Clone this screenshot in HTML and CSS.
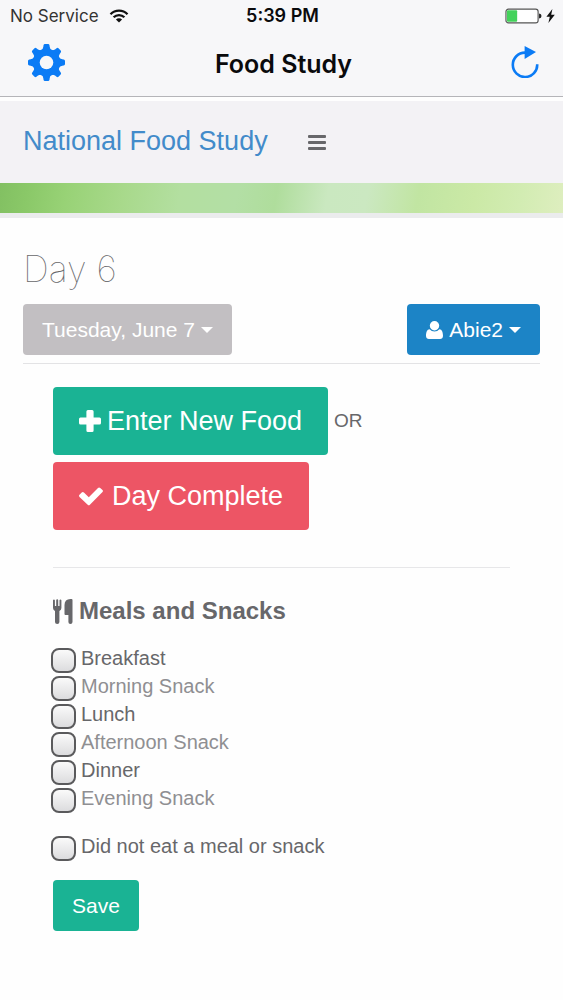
FILE: index.html
```html
<!DOCTYPE html>
<html lang="en">
<head>
<meta charset="utf-8">
<meta name="viewport" content="width=device-width, initial-scale=1">
<title>Food Study</title>
<link rel="stylesheet" href="styles.css">
</head>
<body>
<header class="top">
  <div class="status">
    <div class="carrier">
      <span>No Service</span>
      <svg class="wifi" viewBox="0 0 20 14" aria-hidden="true">
        <path d="M1.5 5.2a12 12 0 0 1 17 0M4.6 8.3a7.6 7.6 0 0 1 10.8 0" fill="none" stroke="currentColor" stroke-width="2.3"/>
        <path d="M10 13.6 6.9 10.5a4.4 4.4 0 0 1 6.2 0z" fill="currentColor"/>
      </svg>
    </div>
    <time class="clock">5:39 PM</time>
    <div class="power">
      <svg class="battery" viewBox="0 0 38 16" aria-hidden="true">
        <rect x="1" y="1" width="33" height="14" rx="2.5" fill="#fff" stroke="#555" stroke-width="1.2"/>
        <rect x="2" y="2" width="10.5" height="12" rx="1" fill="#43d25b"/>
        <path d="M35 5.4q2.5 .4 2.5 2.6t-2.5 2.6z" fill="#222"/>
      </svg>
      <svg class="bolt" viewBox="0 0 9 14" aria-hidden="true"><path d="M6.4 0 .4 7.8h3.4L2.4 14 8.8 5.8H5.2z" fill="#111"/></svg>
    </div>
  </div>
  <div class="titlebar">
    <button class="icon-btn" type="button" aria-label="Settings">
      <svg class="gear" viewBox="0 0 36 36" aria-hidden="true">
        <g fill="currentColor">
          <path id="tooth" d="M13 6q1.600-1 1.900-3.300l.2-1.400Q15.300 0 16.500 0h3q1.200 0 1.400 1.300l.2 1.400Q21.400 5 23 6v24q-1.600 1-1.900 3.300l-.2 1.400q-.2 1.300-1.400 1.300h-3q-1.200 0-1.400-1.300l-.2-1.400Q14.600 31 13 30z"/>
          <use href="#tooth" transform="rotate(45 18 18)"/>
          <use href="#tooth" transform="rotate(90 18 18)"/>
          <use href="#tooth" transform="rotate(135 18 18)"/>
          <circle cx="18" cy="18" r="13.400"/>
        </g>
        <circle cx="18" cy="18" r="6.600" fill="#f7f7f9"/>
      </svg>
    </button>
    <h1 class="app-title">Food Study</h1>
    <button class="icon-btn" type="button" aria-label="Reload">
      <svg class="reload" viewBox="0 0 28 32" aria-hidden="true">
        <path d="M15 6.600H14A12.200 12.200 0 1 0 26.200 18.200" fill="none" stroke="currentColor" stroke-width="2.600"/>
        <path d="M13.600 0v13L25 6z" fill="currentColor"/>
      </svg>
    </button>
  </div>
</header>

<nav class="nav">
  <a class="brand" href="#">National Food Study</a>
  <button class="menu" type="button" aria-label="Menu"><span class="bar"></span><span class="bar"></span><span class="bar"></span></button>
</nav>
<div class="banner"></div>

<main class="page">
  <h2 class="day">Day 6</h2>
  <div class="pickers">
    <button class="btn btn-muted" type="button">Tuesday, June 7<span class="caret"></span></button>
    <button class="btn btn-blue" type="button">
      <svg class="user" viewBox="0 0 17 18" aria-hidden="true"><path d="M3.600 8.200a6.300 6.300 0 0 0 9.800 0C16 8.200 17 11.500 17 14.800 17 17 15.700 18 14 18H3c-1.700 0-3-1-3-3.200C0 11.500 1 8.200 3.600 8.200z"/><circle cx="8.500" cy="4.700" r="4.700"/></svg>Abie2<span class="caret"></span>
    </button>
  </div>

  <div class="content">
    <div class="actions">
      <div class="action-row">
        <button class="btn btn-large btn-green" type="button">
          <svg class="glyph" viewBox="0 0 22 22" aria-hidden="true"><path d="M8.900 0h4.200q1.500 0 1.500 1.500v5.900h5.900q1.500 0 1.500 1.500v4.200q0 1.500-1.500 1.500h-5.900v5.900q0 1.500-1.500 1.500H8.900q-1.500 0-1.500-1.500v-5.900H1.500Q0 14.600 0 13.100V8.900q0-1.500 1.500-1.500h5.900V1.500Q7.400 0 8.900 0z"/></svg>Enter New Food
        </button>
        <span class="or">OR</span>
      </div>
      <button class="btn btn-large btn-red" type="button">
        <svg class="glyph check" viewBox="0 0 24 19" aria-hidden="true"><path d="M23.500 5 10.900 17.700q-1.100 1-2.200 0L.5 9.900q-1-1.100 0-2.200l2.200-2.200q1.100-1 2.200 0l4.900 4.800L19 1q1.100-1 2.200 0l2.300 2q.9 1 0 2z"/></svg>Day Complete
      </button>
    </div>

    <form class="meals">
      <h3 class="meals-title">
        <svg class="cutlery" viewBox="0 0 20 25" aria-hidden="true"><path d="M0 1.200a1 1 0 0 1 1.900 0V7h1.300V1.200a1 1 0 0 1 2 0V7h1.300V1.200a1 1 0 0 1 1.900 0V9q0 2-2 2.900V23q0 2-2.200 2T2 23V11.900Q0 11 0 9zM19.500 1v22q0 2-2.100 2-2 0-2-2v-7h-3q-.9 0-.9-.9V6q0-6 6-6h1q1 0 1 1z"/></svg>Meals and Snacks
      </h3>
      <div class="checks">
        <label class="check-row"><input class="box" type="checkbox"><span>Breakfast</span></label>
        <label class="check-row light"><input class="box" type="checkbox"><span>Morning Snack</span></label>
        <label class="check-row"><input class="box" type="checkbox"><span>Lunch</span></label>
        <label class="check-row light"><input class="box" type="checkbox"><span>Afternoon Snack</span></label>
        <label class="check-row"><input class="box" type="checkbox"><span>Dinner</span></label>
        <label class="check-row light"><input class="box" type="checkbox"><span>Evening Snack</span></label>
      </div>
      <div class="checks">
        <label class="check-row"><input class="box" type="checkbox"><span>Did not eat a meal or snack</span></label>
      </div>
      <button class="btn btn-green" type="submit">Save</button>
    </form>
  </div>
</main>
</body>
</html>
```
FILE: styles.css
```css
* { box-sizing: border-box; }
body {
  margin: 0;
  background: #fefefe;
  color: #67676a;
  font: 20px/28px "Liberation Sans", Arial, sans-serif;
}
h1, h2, h3 { margin: 0; }
svg { display: block; flex: none; }
button { font: inherit; cursor: pointer; }

/* Status and title bars */
.top {
  background: #f7f7f9;
  border-bottom: 1px solid #b5b5b9;
  font-family: Inter, sans-serif;
  color: #0a0a0c;
}
.status {
  display: grid;
  grid-template-columns: 1fr auto 1fr;
  align-items: center;
  height: 32px;
  padding: 0 8px 0 10px;
  font-size: 17px;
}
.carrier { display: flex; align-items: center; gap: 10px; color: #333; }
.wifi { width: 20px; height: 14px; color: #111; }
.clock { font-size: 18px; font-weight: 600; }
.power { display: flex; align-items: center; justify-content: flex-end; gap: 4px; }
.battery { width: 37px; height: 16px; }
.bolt { width: 9px; height: 14px; }
.titlebar {
  display: grid;
  grid-template-columns: 1fr auto 1fr;
  align-items: center;
  height: 64px;
  padding: 0 24px 4px 28px;
}
.icon-btn {
  justify-self: start;
  padding: 0;
  border: 0;
  background: none;
  color: #0b7bf5;
}
.icon-btn:last-child { justify-self: end; }
.gear { width: 37px; height: 37px; }
.reload { width: 28px; height: 32px; }
.app-title { padding-top: 3px; font-size: 25px; font-weight: 600; }

/* Site navigation */
.nav {
  display: flex;
  align-items: center;
  gap: 40px;
  height: 86px;
  padding: 0 23px 2px;
  border-top: 4px solid #fefefe;
  background: #f3f2f5;
}
.brand { color: #428bca; font-size: 27px; text-decoration: none; }
.menu {
  display: grid;
  gap: 3px;
  width: 18px;
  padding: 3px 0 0;
  border: 0;
  background: none;
}
.bar { height: 3px; border-radius: 1px; background: #67676a; }
.banner {
  height: 35px;
  border-bottom: 5px solid #ebeced;
  background: linear-gradient(100deg, #82c062 0, #8ac868 5%, #98d276 12%, #a8d98b 22%, #b3dfa0 32%, #b3dfa5 42%, #afdd9c 49%, #cae8c0 58%, #cbe8c1 65%, #c1e5a2 74%, #cbe9a6 84%, #d2ecb2 92%, #deeebf 100%);
  background-clip: padding-box;
}

/* Page */
.page { padding: 28px 23px; }
.day { font: 100 36px/46px Inter, sans-serif; }
.pickers {
  display: flex;
  justify-content: space-between;
  margin-top: 12px;
  padding-bottom: 8px;
  border-bottom: 1px solid #e3e3e5;
}
.btn {
  display: inline-flex;
  align-items: center;
  height: 51px;
  padding: 0 19px;
  border: 0;
  border-radius: 4px;
  color: #fff;
  font-size: 21px;
}
.btn-muted { background: #c2bfc2; }
.btn-blue { background: #1c84c6; }
.btn-green { background: #1ab394; }
.btn-red { background: #ed5565; }
.btn-large { height: 68px; padding: 0 26px; font-size: 27px; }
.btn svg { fill: currentColor; }
.caret {
  margin-left: 6px;
  border: 6px solid transparent;
  border-top-color: currentColor;
  border-bottom: 0;
}
.user { width: 17px; height: 18px; margin-right: 6px; }
.glyph { width: 22px; height: 22px; margin-right: 6px; }
.check { width: 24px; height: 19px; margin-right: 9px; }

.content { padding: 23px 30px; }
.actions {
  display: grid;
  justify-items: start;
  gap: 7px;
  padding-bottom: 37px;
  border-bottom: 1px solid #e7e7e9;
}
.action-row { display: flex; align-items: center; gap: 6px; }
.or { font-size: 19px; }

.meals { padding-top: 28px; }
.meals-title { display: flex; align-items: center; gap: 6px; font-size: 24px; line-height: 30px; }
.cutlery { width: 20px; height: 25px; fill: currentColor; }
.checks { margin: 18px 0 20px -2px; }
.check-row { display: flex; gap: 5px; width: fit-content; height: 28px; }
.light { color: #8f8f92; }
.box {
  appearance: none;
  width: 25px;
  height: 25px;
  margin: 4px 0 0;
  border: 2px solid #5a5a5c;
  border-radius: 8px;
  background: linear-gradient(#fafafa, #dcdcde);
}
.box:checked { background: #1ab394; }
```
